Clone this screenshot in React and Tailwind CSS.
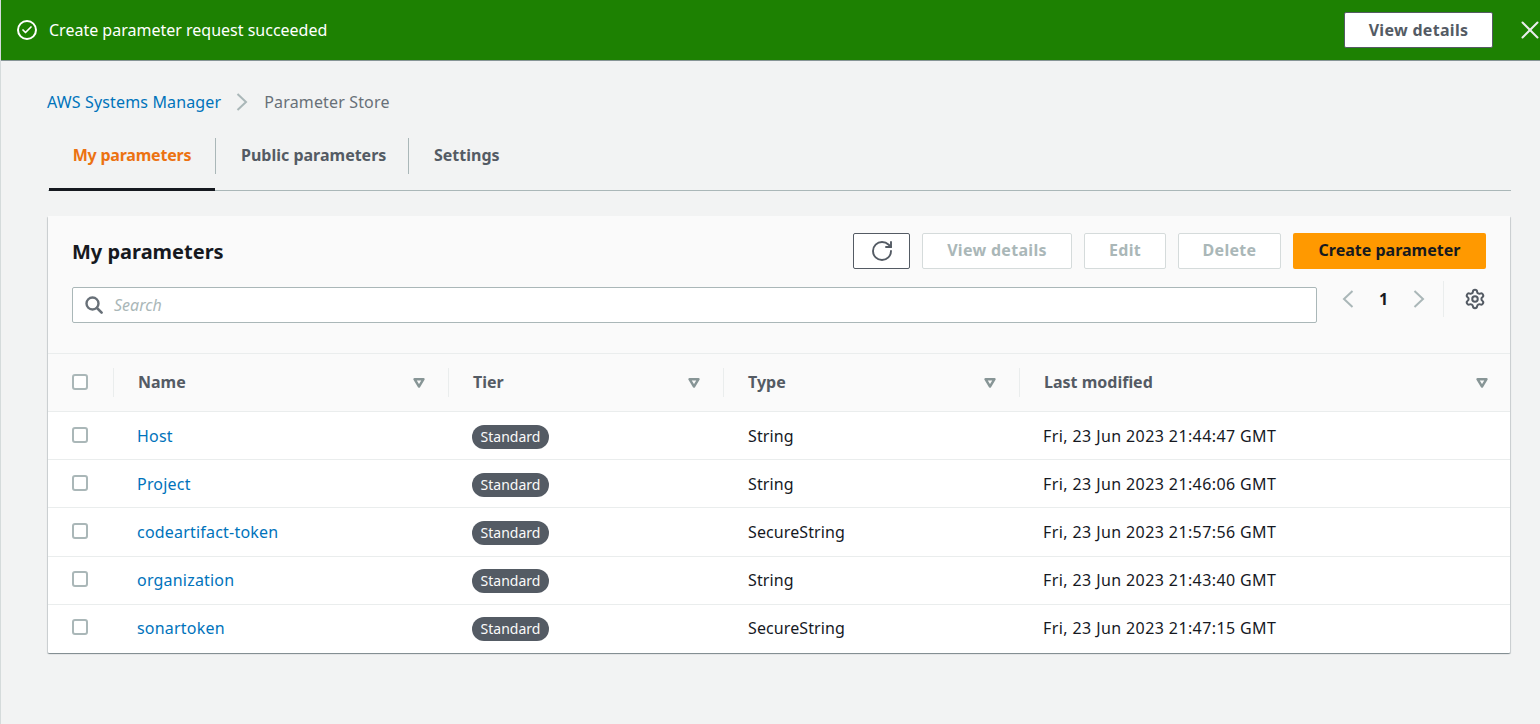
import { Check, RotateCw, Settings, X } from 'lucide-react';

const params = [
  { name: 'Host', type: 'String', modified: 'Fri, 23 Jun 2023 21:44:47 GMT' },
  { name: 'Project', type: 'String', modified: 'Fri, 23 Jun 2023 21:46:06 GMT' },
  { name: 'codeartifact-token', type: 'SecureString', modified: 'Fri, 23 Jun 2023 21:57:56 GMT' },
  { name: 'organization', type: 'String', modified: 'Fri, 23 Jun 2023 21:43:40 GMT' },
  { name: 'sonartoken', type: 'SecureString', modified: 'Fri, 23 Jun 2023 21:47:15 GMT' },
];

const gridCols = 'grid grid-cols-[65px_335px_275px_296px_1fr]';

const Checkbox = ({ className = '' }) => (
  <span className={`block h-4 w-4 rounded-[3px] border-2 border-[#aab7b8] bg-white ${className}`} />
);

const FilterArrow = () => (
  <svg width="12" height="10" viewBox="0 0 12 10" className="shrink-0">
    <path d="M1.5 1.2h9L6 8.5z" fill="none" stroke="#879596" strokeWidth="2.4" strokeLinejoin="round" />
  </svg>
);

const Chevron = ({ left, className = '' }) => (
  <svg width="12" height="18" viewBox="0 0 12 18" className={`shrink-0 ${className}`}>
    <path d={left ? 'M10.5 1 2 9l8.5 8' : 'M1.5 1 10 9l-8.5 8'} fill="none" stroke="#aab7b8" strokeWidth="2" />
  </svg>
);

const SearchIcon = () => (
  <svg width="18" height="18" viewBox="0 0 18 18" className="shrink-0">
    <circle cx="7.5" cy="7.5" r="6" fill="none" stroke="#687078" strokeWidth="2.4" />
    <path d="M12 12l4.6 4.6" fill="none" stroke="#687078" strokeWidth="2.6" strokeLinecap="round" />
  </svg>
);

const HeadCell = ({ label, last }) => (
  <div className={`flex h-[29px] items-center justify-between border-l border-[#eaeded] pl-6 ${last ? 'pr-[22px]' : 'pr-[23px]'}`}>
    <span className="pb-0.5 font-bold text-[#545b64]">{label}</span>
    <FilterArrow />
  </div>
);

const DisabledButton = ({ label, className }) => (
  <button className={`h-9 rounded-[2px] border border-[#d5dbdb] bg-white pb-[3px] font-bold tracking-[0.3px] text-[#aab7b8] ${className}`}>
    {label}
  </button>
);

const App = () => {
  return (
    <div className="min-h-[724px] border-l border-[#d5dbdb] bg-[#f2f3f3] font-['Noto_Sans',sans-serif] text-base text-[#16191f]">
      {/* Flash */}
      <div className="flex h-[61px] items-center overflow-hidden border-b border-[#879596] bg-[#1d8102] pl-[16px] text-white">
        <span className="flex h-5 w-5 items-center justify-center rounded-full border-2 border-white">
          <Check size={12} strokeWidth={3.5} />
        </span>
        <span className="ml-[12px]">Create parameter request succeeded</span>
        <button className="ml-auto h-9 w-[149px] rounded-[2px] border border-[#545b64] bg-white font-bold tracking-[0.3px] text-[#545b64]">
          View details
        </button>
        <X size={30} strokeWidth={1.6} className="ml-[22px] -mr-[5px] text-[#eaeded]" />
      </div>

      <div className="pl-[47px] pr-[29px]">
        {/* Breadcrumb */}
        <div className="-ml-px flex items-center pt-[29px] tracking-[0.15px]">
          <span className="text-[#0073bb]">AWS Systems Manager</span>
          <Chevron className="ml-[15px] mr-[16px]" />
          <span className="text-[#687078]">Parameter Store</span>
        </div>

        {/* Tabs */}
        <div className="mt-[19px] flex h-[58px] border-b border-[#aab7b8] pl-px font-bold">
          <div className="flex h-[58px] w-[166px] items-start justify-center border-b-[3px] border-[#16191f] pt-[10px] tracking-[-0.2px] text-[#ec7211]">
            My parameters
          </div>
          <div className="mt-[5px] flex h-[36px] w-[193px] items-center border-l border-[#aab7b8] pb-0.5 pl-[25px] text-[#545b64]">
            Public parameters
          </div>
          <div className="mt-[5px] flex h-[36px] w-[118px] items-center border-l border-[#aab7b8] pb-0.5 pl-[25px] text-[#545b64]">
            Settings
          </div>
        </div>

        {/* Card */}
        <div className="mt-[25px] mr-px overflow-hidden rounded-[1px] bg-white shadow-[0_1px_1px_0_rgba(0,28,36,0.3),1px_1px_1px_0_rgba(0,28,36,0.15),-1px_1px_1px_0_rgba(0,28,36,0.15)]">
          <div className="h-[138px] border-b border-[#eaeded] bg-[#fafafa] px-6 pt-[17px]">
            <div className="flex items-center">
              <h1 className="h-9 pt-px text-xl font-bold leading-9 text-[#16191f]">My parameters</h1>
              <button className="ml-auto flex h-9 w-[57px] items-center justify-center rounded-[2px] border border-[#545b64] bg-white text-[#545b64]">
                <RotateCw size={24} strokeWidth={1.9} />
              </button>
              <DisabledButton label="View details" className="ml-3 w-[150px]" />
              <DisabledButton label="Edit" className="ml-3 w-[82px]" />
              <DisabledButton label="Delete" className="ml-3 w-[103px]" />
              <button className="ml-3 h-9 w-[193px] rounded-[2px] bg-[#ff9900] pb-[3px] font-bold text-[#16191f]">
                Create parameter
              </button>
            </div>
            <div className="mt-[18px] flex items-start">
              <div className="flex h-9 flex-1 items-center rounded-[2px] border border-[#aab7b8] bg-white pl-3">
                <SearchIcon />
                <span className="ml-[11px] italic text-[#aab7b8]">Search</span>
              </div>
              {/* Pager */}
              <div className="-mt-[6px] flex h-9 w-[169px] items-center">
                <Chevron left className="ml-[25px]" />
                <span className="ml-[25px] w-[9px] font-bold">1</span>
                <Chevron className="ml-[25px]" />
                <span className="ml-[18px] h-9 border-l border-[#eaeded]" />
                <Settings size={22} strokeWidth={2.2} className="ml-[20px] text-[#545b64]" />
              </div>
            </div>
          </div>

          {/* Table header */}
          <div className={`${gridCols} h-[58px] items-center border-b border-[#eaeded] bg-[#fafafa]`}>
            <div className="pl-6"><Checkbox className="mb-px" /></div>
            <HeadCell label="Name" />
            <HeadCell label="Tier" />
            <HeadCell label="Type" />
            <HeadCell label="Last modified" last />
          </div>

          {/* Rows */}
          {params.map((p, i) => (
            <div
              key={p.name}
              className={`${gridCols} h-[48.2px] items-center border-b ${i < params.length - 1 ? 'border-[#eaeded]' : 'border-transparent'}`}
            >
              <div className="pl-6"><Checkbox className="mb-[2px]" /></div>
              <div className="pl-6 tracking-[0.2px] text-[#0073bb]">{p.name}</div>
              <div className="pl-6 pt-0.5">
                <span className="block h-6 w-[77px] rounded-full bg-[#545b64] text-center text-sm leading-6 text-[#fafafa]">
                  Standard
                </span>
              </div>
              <div className="pl-[25px] tracking-[0.1px]">{p.type}</div>
              <div className="pl-6 tracking-[0.4px]">{p.modified}</div>
            </div>
          ))}
        </div>
      </div>
    </div>
  );
};

export default App;
